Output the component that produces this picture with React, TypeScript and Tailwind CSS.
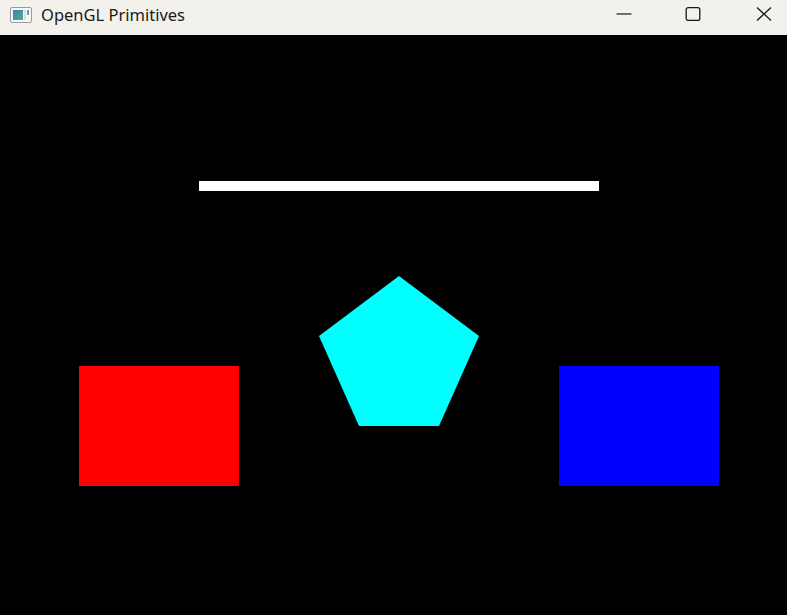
function AppIcon() {
  return (
    <svg width="22" height="16" viewBox="0 0 22 16" className="shrink-0">
      <defs>
        <linearGradient id="g" x1="0" y1="0" x2="1" y2="1">
          <stop offset="0" stopColor="#3b7fb8" />
          <stop offset="1" stopColor="#4fb08a" />
        </linearGradient>
      </defs>
      <rect x="0.5" y="0.5" width="21" height="15" rx="1.5" fill="#f7f7f7" stroke="#9a9a9a" />
      <rect x="3" y="3" width="10" height="10" fill="url(#g)" />
      <rect x="14.5" y="3" width="1" height="10" fill="#c8c8c8" />
      <rect x="17" y="3" width="2" height="5" fill="#7a9aa6" />
    </svg>
  )
}

export default function App() {
  return (
    <div className="w-[787px] h-[615px] flex flex-col bg-black overflow-hidden">
      <div
        className="h-[35px] shrink-0 flex items-start pt-[6px] bg-[#f3f1ec] text-[#1a1a1a]"
        style={{ fontFamily: '"Noto Sans", sans-serif' }}
      >
        <div className="pl-[10px] pr-[9px] pt-[1px] flex items-center">
          <AppIcon />
        </div>
        <span className="text-[16.5px] leading-[18px]">OpenGL Primitives</span>
        <div className="ml-auto flex items-start pt-[1px]">
          <div className="w-[46px] flex justify-center mr-[23px]">
            <svg width="16" height="14" viewBox="0 0 16 14">
              <path d="M0.5 7 H15.5" stroke="#1a1a1a" strokeWidth="1.2" />
            </svg>
          </div>
          <div className="w-[46px] flex justify-center mr-[25px]">
            <svg width="16" height="14" viewBox="0 0 16 14">
              <rect x="1.2" y="0.7" width="13.6" height="12.8" rx="2" fill="none" stroke="#1a1a1a" strokeWidth="1.3" />
            </svg>
          </div>
          <div className="w-[46px] flex justify-center">
            <svg width="16" height="14" viewBox="0 0 16 14">
              <path d="M1 0.5 L15 13.5 M15 0.5 L1 13.5" stroke="#1a1a1a" strokeWidth="1.3" />
            </svg>
          </div>
        </div>
      </div>
      <svg width="787" height="580" viewBox="0 35 787 580" className="block">
        <rect x="199" y="181" width="400" height="10" fill="#ffffff" />
        <polygon points="399,276 479,336 439,426 359,426 319,336" fill="#00ffff" />
        <rect x="79" y="366" width="160" height="120" fill="#ff0000" />
        <rect x="559" y="366" width="160" height="120" fill="#0000ff" />
      </svg>
    </div>
  )
}
